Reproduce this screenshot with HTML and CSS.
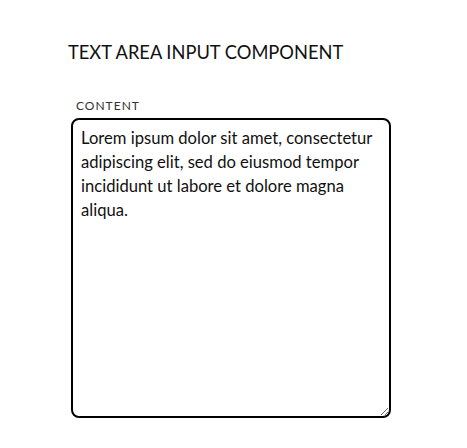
FILE: index.html
```html
<!DOCTYPE html>
<html lang="en">
<head>
  <meta charset="UTF-8">
  <title>Text Area Input Component</title>
  <link rel="stylesheet" href="styles.css">
</head>
<body>
  <div class="wrapper">
    <h1 class="title">TEXT AREA INPUT COMPONENT</h1>
    <div class="field">
      <label class="field-label" for="content">CONTENT</label>
      <textarea class="field-input" id="content">Lorem ipsum dolor sit amet, consectetur adipiscing elit, sed do eiusmod tempor incididunt ut labore et dolore magna aliqua.</textarea>
    </div>
  </div>
</body>
</html>
```

FILE: styles.css
```css
body {
  margin: 0;
  font-family: 'Lato', 'Open Sans', sans-serif;
  color: #111;
  background: #fff;
}

.wrapper {
  padding: 40px 0 0 68px;
}

.title {
  margin: 0;
  font-size: 18.3px;
  font-weight: 400;
  line-height: 22px;
  padding-top: 1px;
}

.field {
  margin-top: 36px;
  display: flex;
  flex-direction: column;
  align-items: flex-start;
}

.field-label {
  margin-left: 8px;
  font-size: 12px;
  letter-spacing: 1px;
  line-height: 14px;
  color: #333;
}

.field-input {
  margin: 5px 0 0 3px;
  width: 320px;
  height: 300px;
  box-sizing: border-box;
  padding: 6px 8px;
  border: 2px solid #000;
  border-radius: 8px;
  font-family: inherit;
  font-size: 16.6px;
  line-height: 24px;
  color: #111;
  outline: none;
}
```
